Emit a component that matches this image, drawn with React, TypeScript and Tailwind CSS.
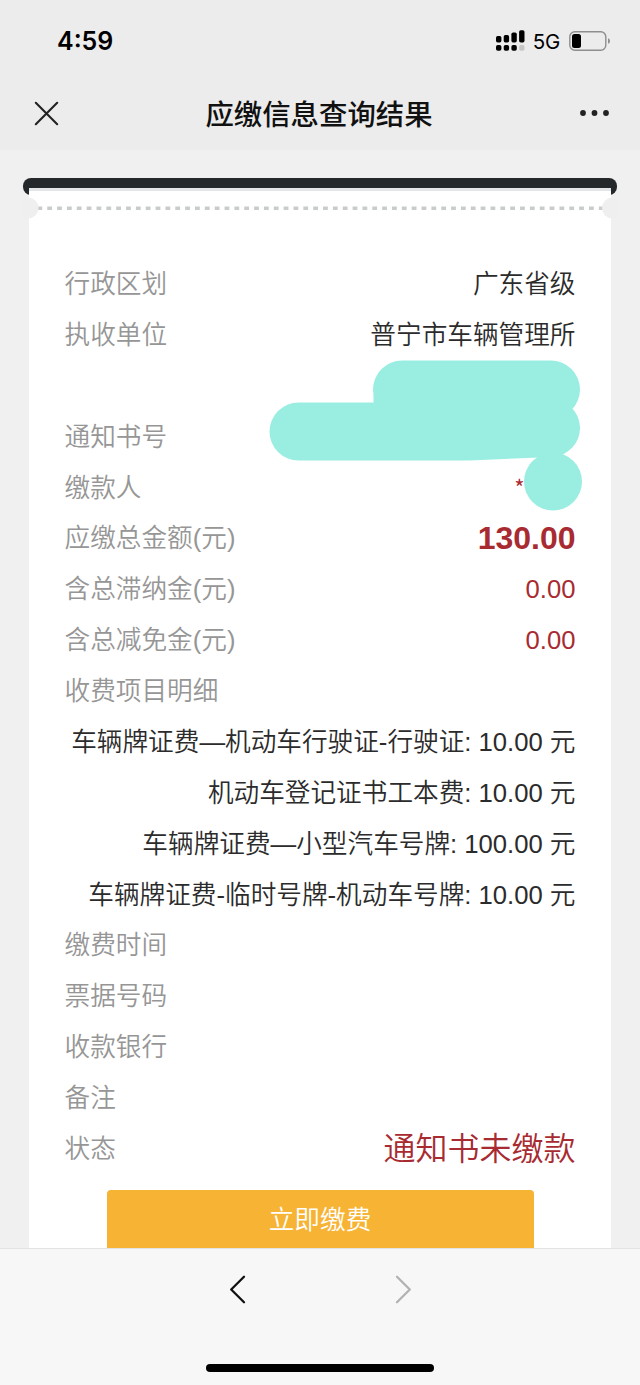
import React from 'react';

interface Row {
  label: string;
  value?: string;
  tall?: boolean;
  valueClass?: string;
}

const summaryRows: Row[] = [
  { label: '行政区划', value: '广东省级' },
  { label: '执收单位', value: '普宁市车辆管理所' },
  { label: '通知书号', tall: true },
  { label: '缴款人', value: '*', valueClass: "text-[#a82b32] text-[22px] font-normal pb-[2px] pr-[51px] font-['Noto_Sans_CJK_SC',sans-serif]" },
  { label: '应缴总金额(元)', value: '130.00', valueClass: 'text-[#a82b32] text-[32px] font-bold' },
  { label: '含总滞纳金(元)', value: '0.00', valueClass: 'text-[#a82b32]' },
  { label: '含总减免金(元)', value: '0.00', valueClass: 'text-[#a82b32]' },
  { label: '收费项目明细' },
];

const feeItems = [
  '车辆牌证费—机动车行驶证-行驶证: 10.00 元',
  '机动车登记证书工本费: 10.00 元',
  '车辆牌证费—小型汽车号牌: 100.00 元',
  '车辆牌证费-临时号牌-机动车号牌: 10.00 元',
];

const resultRows: Row[] = [
  { label: '缴费时间' },
  { label: '票据号码' },
  { label: '收款银行' },
  { label: '备注' },
  { label: '状态', value: '通知书未缴款', valueClass: 'text-[#a82b32] text-[32px]' },
];

const InfoRow: React.FC<{ row: Row }> = ({ row }) => (
  <div className={`flex justify-between items-end ${row.tall ? 'h-[101.76px]' : 'h-[50.88px]'}`}>
    <span className="text-[#969696] leading-[50.88px]">{row.label}</span>
    {row.value && <span className={`leading-[50.88px] ${row.valueClass || 'text-[#2b2b2b]'}`}>{row.value}</span>}
  </div>
);

const SignalIcon = () => (
  <svg width="29" height="22" viewBox="0 0 29 22">
    <rect x="0" y="6" width="5.4" height="6.5" rx="1.7" />
    <rect x="7.7" y="5" width="5.4" height="7.5" rx="1.7" />
    <rect x="15.4" y="2.5" width="5.4" height="10" rx="1.7" />
    <rect x="23.1" y="0.3" width="5.4" height="12.2" rx="1.7" />
    <rect x="0" y="15" width="5.4" height="5.8" rx="1.8" />
    <rect x="7.7" y="15" width="5.4" height="5.8" rx="1.8" />
    <rect x="15.4" y="15" width="5.4" height="5.8" rx="1.8" />
    <rect x="23.1" y="15" width="5.4" height="5.8" rx="1.8" fill="#c6c6c6" />
  </svg>
);

const BatteryIcon = () => (
  <svg width="42" height="20" viewBox="0 0 42 20">
    <rect x="0.8" y="0.8" width="36" height="18.4" rx="5" fill="none" stroke="#8e8e8e" strokeWidth="1.4" />
    <rect x="3" y="3" width="9" height="14" rx="2.5" fill="#000" />
    <path d="M39 7.2c1.3.5 2 1.5 2 2.8s-.7 2.3-2 2.8z" fill="#8e8e8e" />
  </svg>
);

const TicketTop = () => (
  <svg width="594" height="68" viewBox="0 0 594 68" className="block">
    <path d="M8 0H586a8 8 0 0 1 8 8v1a8 8 0 0 1-8 8H8a8 8 0 0 1-8-8V8a8 8 0 0 1 8-8z" fill="#25282a" />
    <rect x="6" y="10" width="582" height="58" fill="#fff" />
    <rect x="6" y="10" width="582" height="3" fill="#e4e5e7" />
    <line x1="14.4" x2="580" y1="30.2" y2="30.2" stroke="#c9cccd" strokeWidth="3.4" strokeDasharray="4.8 5.05" />
    <circle cx="5" cy="30" r="10.5" fill="#efefef" />
    <circle cx="589.5" cy="30" r="10.5" fill="#efefef" />
  </svg>
);

// marker strokes that hide the notice number and the payer's name
const Redaction = () => (
  <svg width="314" height="152" viewBox="0 0 314 152">
    <g stroke="#9aeee1" strokeWidth="58" strokeLinecap="round" fill="none">
      <path d="M133 30.5H282" />
      <path d="M29.5 72.5H200L282 69" />
      <path d="M284 122.5h.01" />
    </g>
    <path d="M104.5 36H282V72H104.5z" fill="#9aeee1" />
  </svg>
);

const App: React.FC = () => {
  return (
    <div className="w-[640px] h-[1385px] flex flex-col overflow-hidden bg-[#f0f0f0] font-['Liberation_Sans','Noto_Sans_CJK_SC',sans-serif]">
      <header className="h-[150px] shrink-0 bg-[#ececec]">
        <div className="h-[82px] pl-[57px] pr-[29px] flex items-center justify-between">
          <span className="pt-[2px] font-['Inter',sans-serif] text-[25px] font-semibold text-black">4:59</span>
          <div className="flex items-center">
            <SignalIcon />
            <span className="pt-[2px] ml-[8px] mr-[9px] font-['Inter',sans-serif] text-[20.5px] leading-none font-normal tracking-[-0.2px] text-black">5G</span>
            <BatteryIcon />
          </div>
        </div>
        <div className="h-[62px] pl-[34px] pr-[31px] flex items-center justify-between">
          <svg width="25" height="25" viewBox="0 0 25 25" stroke="#222" strokeWidth="2.1" strokeLinecap="round">
            <path d="M1.8 1.8L23.2 23.2M23.2 1.8L1.8 23.2" />
          </svg>
          <h1 className="pt-[5px] pr-px text-[28.4px] font-medium text-[#111] leading-none">应缴信息查询结果</h1>
          <svg width="29" height="8" viewBox="0 0 29 8" fill="#222">
            <circle cx="3" cy="4" r="2.9" />
            <circle cx="14.5" cy="4" r="2.9" />
            <circle cx="26" cy="4" r="2.9" />
          </svg>
        </div>
      </header>

      <main className="flex-1 min-h-0 overflow-hidden pt-[28px]">
        <div className="flex justify-center">
          <TicketTop />
        </div>
        <div className="relative ml-[29px] w-[582px] bg-white px-[35.5px] pt-[14px] -mt-px text-[25.65px] font-[350]">
          {summaryRows.map(row => <InfoRow key={row.label} row={row} />)}
          {feeItems.map(item => (
            <p key={item} className="h-[50.88px] leading-[50.88px] text-right whitespace-nowrap text-[#2b2b2b]">{item}</p>
          ))}
          {resultRows.map(row => <InfoRow key={row.label} row={row} />)}
          <button className="block mt-[15.5px] mx-auto w-[427px] h-[70px] pb-[10px] rounded-[4px] bg-[#f7b334] text-white">立即缴费</button>
          <div className="absolute left-[239.5px] top-[114px]">
            <Redaction />
          </div>
        </div>
      </main>

      <footer className="h-[137px] shrink-0 bg-[#f7f7f7] border-t border-[#e3e3e3] flex flex-col items-center justify-between pt-[26px] pb-[13px]">
        <div className="flex gap-[149px]">
          <svg width="17" height="29" viewBox="0 0 17 29" fill="none" stroke="#111" strokeWidth="2.3" strokeLinecap="round" strokeLinejoin="round">
            <path d="M15 1.8L2.2 14.5L15 27.2" />
          </svg>
          <svg width="17" height="29" viewBox="0 0 17 29" fill="none" stroke="#b2b2b2" strokeWidth="2.3" strokeLinecap="round" strokeLinejoin="round">
            <path d="M2 1.8L14.8 14.5L2 27.2" />
          </svg>
        </div>
        <div className="w-[228px] h-[8px] rounded-full bg-black" />
      </footer>
    </div>
  );
};

export default App;
